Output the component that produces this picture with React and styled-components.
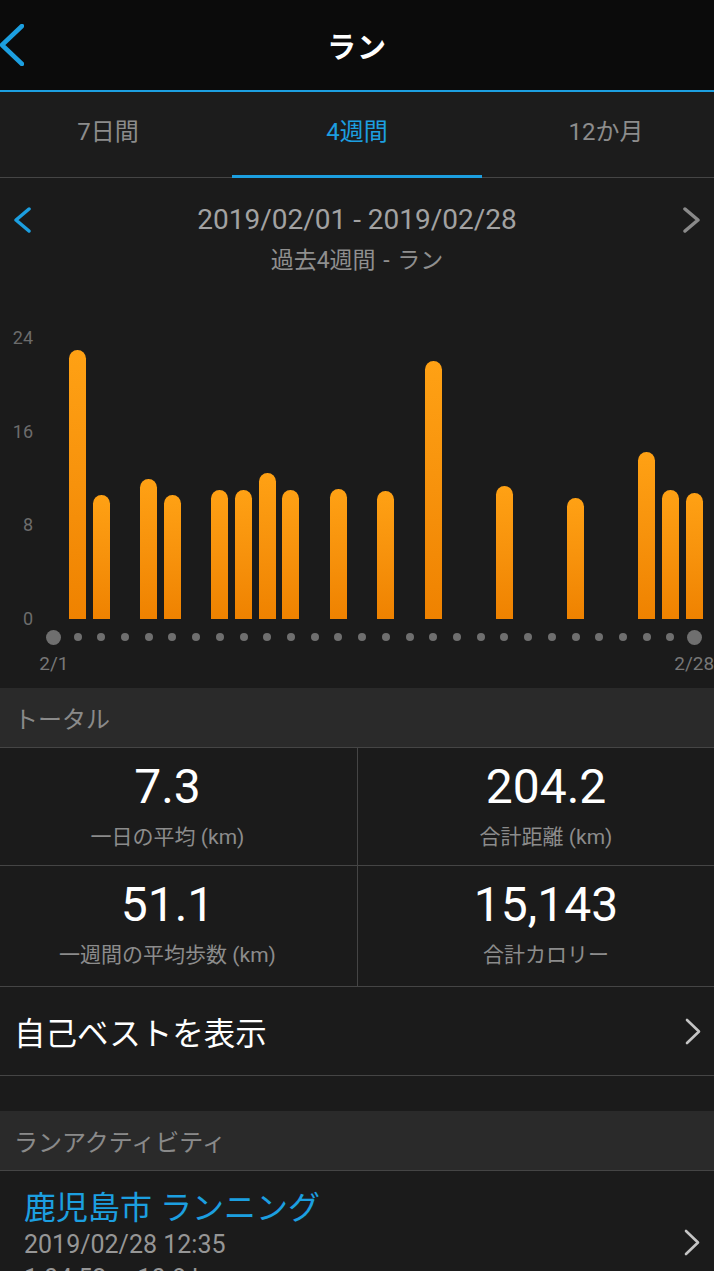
import React from 'react'
import styled, { createGlobalStyle } from 'styled-components'

const GlobalStyle = createGlobalStyle`
    html, body {
        margin: 0;
        padding: 0;
        background: #1b1b1b;
    }
    body {
        font-family: Roboto, "Noto Sans CJK JP", sans-serif;
        -webkit-font-smoothing: antialiased;
    }
`

const BLUE = '#1c9fe0'
const LINE = '#454545'

const Page = styled.div`
    width: 714px;
    height: 1271px;
    overflow: hidden;
    background: #1b1b1b;
    color: #fff;
`

const Header = styled.header`
    height: 90px;
    background: #0b0b0b;
    border-bottom: 2px solid ${BLUE};
    display: grid;
    grid-template-columns: 80px 1fr 80px;
    align-items: center;
`

const BackButton = styled.div`
    display: flex;
    align-items: center;
    height: 100%;
`

const Title = styled.h1`
    margin: 0;
    text-align: center;
    font-size: 29px;
    font-weight: 700;
    letter-spacing: 1px;
`

const TabBar = styled.nav`
    height: 85px;
    display: grid;
    grid-template-columns: 216px 1fr 216px;
    border-bottom: 1px solid ${LINE};
    background: #1c1c1c;
`

const Tab = styled.div`
    display: flex;
    flex-direction: column;
    align-items: center;
`

const TabLabel = styled.div`
    flex: 1;
    display: flex;
    align-items: center;
    padding-bottom: 8px;
    font-size: 24px;
    color: ${p => (p.$active ? BLUE : '#8c8c8c')};
`

const TabLine = styled.div`
    width: 250px;
    height: 3px;
    margin-bottom: -1px;
    background: ${p => (p.$active ? BLUE : 'transparent')};
`

const RangeSection = styled.section`
    padding-top: 25px;
`

const RangeRow = styled.div`
    display: flex;
    align-items: center;
    justify-content: space-between;
    padding: 0 14px;
`

const RangeText = styled.div`
    font-size: 28px;
    line-height: 34px;
    color: #a2a2a2;
`

const SubText = styled.div`
    text-align: center;
    font-size: 23px;
    line-height: 30px;
    margin-top: 9px;
    color: #8f8f8f;
    word-spacing: 2px;
`

const ChartBody = styled.div`
    display: flex;
    align-items: flex-start;
    margin-top: 52px;
`

const Axis = styled.div`
    width: 33px;
    height: 301px;
    padding-right: 9px;
    display: flex;
    flex-direction: column;
    justify-content: space-between;
    align-items: flex-end;
`

const AxisLabel = styled.div`
    font-size: 18px;
    line-height: 20px;
    color: #6c6c6c;
`

const Plot = styled.div`
    width: 664px;
    display: grid;
    grid-template-columns: repeat(28, minmax(0, 1fr));
    grid-template-rows: 291px 36px 16px;
`

const BarCell = styled.div`
    display: flex;
    align-items: flex-end;
    justify-content: center;
`

const Bar = styled.div`
    width: 17px;
    border-radius: 8.5px 8.5px 0 0;
    background: linear-gradient(180deg, #ffa114 0%, #f7920c 50%, #ef8200 100%);
`

const DotCell = styled.div`
    display: flex;
    align-items: center;
    justify-content: center;
`

const Dot = styled.div`
    flex: none;
    width: ${p => (p.$big ? 15 : 8)}px;
    height: ${p => (p.$big ? 15 : 8)}px;
    border-radius: 50%;
    background: #6f6f6f;
`

const DateCell = styled.div`
    display: flex;
    justify-content: center;
    align-items: center;
    white-space: nowrap;
    font-size: 19px;
    color: #777;
`

const SectionHead = styled.div`
    height: 60px;
    margin-top: ${p => p.$gap || 0}px;
    background: #2a2a2a;
    border-bottom: 1px solid ${LINE};
    display: flex;
    align-items: center;
    padding-left: 14px;
    font-size: 24px;
    color: #8a8a8a;
    box-sizing: border-box;
`

const StatGrid = styled.div`
    display: grid;
    grid-template-columns: 358px 1fr;
    grid-template-rows: 118px 120px;
    border-bottom: 1px solid ${LINE};
`

const Stat = styled.div`
    display: flex;
    flex-direction: column;
    align-items: center;
    padding-top: 12px;
    padding-right: ${p => (p.$left ? 22 : 0)}px;
    padding-left: ${p => (p.$left ? 0 : 20)}px;
    box-sizing: border-box;
    border-right: ${p => (p.$left ? `1px solid ${LINE}` : 'none')};
    border-bottom: ${p => (p.$top ? `1px solid ${LINE}` : 'none')};
`

const StatValue = styled.div`
    font-size: 48px;
    line-height: 54px;
    color: #fff;
`

const StatLabel = styled.div`
    margin-top: 9px;
    font-size: 21px;
    line-height: 28px;
    color: #8c8c8c;
`

const LinkRow = styled.div`
    height: 88px;
    display: flex;
    align-items: center;
    justify-content: space-between;
    padding: 0 13px 0 14px;
    border-bottom: 1px solid ${LINE};
    font-size: 31.5px;
    color: #fff;
`

const ActivityRow = styled.div`
    display: flex;
    align-items: center;
    justify-content: space-between;
    padding: 17px 14px 0 24px;
`

const ActivityInfo = styled.div`
    display: flex;
    flex-direction: column;
`

const ActivityTitle = styled.div`
    font-size: 32px;
    line-height: 40px;
    color: ${BLUE};
`

const ActivityMeta = styled.div`
    font-size: 25px;
    line-height: 34px;
    color: #969696;
    white-space: pre;
`

const Chevron = ({ dir = 'right', color, w = 16, h = 24, stroke = 3 }) => (
    <svg width={w} height={h} viewBox={`0 0 ${w} ${h}`} fill="none">
        <path
            d={dir === 'left'
                ? `M${w - 2} 2 L2 ${h / 2} L${w - 2} ${h - 2}`
                : `M2 2 L${w - 2} ${h / 2} L2 ${h - 2}`}
            stroke={color}
            strokeWidth={stroke}
            strokeLinecap="round"
            strokeLinejoin="round"
        />
    </svg>
)

const runs = { 1: 23.0, 2: 10.6, 4: 12.0, 5: 10.6, 7: 11.0, 8: 11.0, 9: 12.5, 10: 11.0, 12: 11.1, 14: 10.9, 16: 22.0, 19: 11.4, 22: 10.3, 25: 14.3, 26: 11.0, 27: 10.8 }
const days = Array.from({ length: 28 }, (_, i) => i)
const PX_PER_KM = 281 / 24

const stats = [
    { value: '7.3', label: '一日の平均 (km)' },
    { value: '204.2', label: '合計距離 (km)' },
    { value: '51.1', label: '一週間の平均歩数 (km)' },
    { value: '15,143', label: '合計カロリー' },
]

const App = () => {
    return (
        <Page>
            <GlobalStyle />
            <Header>
                <BackButton>
                    <Chevron dir="left" color={BLUE} w={24} h={42} stroke={4.5} />
                </BackButton>
                <Title>ラン</Title>
                <div />
            </Header>

            <TabBar>
                {['7日間', '4週間', '12か月'].map((t, i) => (
                    <Tab key={t}>
                        <TabLabel $active={i === 1}>{t}</TabLabel>
                        <TabLine $active={i === 1} />
                    </Tab>
                ))}
            </TabBar>

            <RangeSection>
                <RangeRow>
                    <Chevron dir="left" color={BLUE} w={17} h={26} stroke={3.5} />
                    <RangeText>2019/02/01 - 2019/02/28</RangeText>
                    <Chevron dir="right" color="#8a8a8a" w={17} h={26} stroke={3.5} />
                </RangeRow>
                <SubText>過去4週間 - ラン</SubText>

                <ChartBody>
                    <Axis>
                        {['24', '16', '8', '0'].map(l => <AxisLabel key={l}>{l}</AxisLabel>)}
                    </Axis>
                    <Plot>
                        {days.map(d => (
                            <BarCell key={'b' + d}>
                                {runs[d] && <Bar style={{ height: runs[d] * PX_PER_KM }} />}
                            </BarCell>
                        ))}
                        {days.map(d => (
                            <DotCell key={'d' + d}>
                                <Dot $big={d === 0 || d === 27} />
                            </DotCell>
                        ))}
                        {days.map(d => (
                            <DateCell key={'l' + d}>
                                {d === 0 ? '2/1' : d === 27 ? '2/28' : ''}
                            </DateCell>
                        ))}
                    </Plot>
                </ChartBody>
            </RangeSection>

            <SectionHead $gap={17}>トータル</SectionHead>
            <StatGrid>
                {stats.map((s, i) => (
                    <Stat key={s.label} $left={i % 2 === 0} $top={i < 2}>
                        <StatValue>{s.value}</StatValue>
                        <StatLabel>{s.label}</StatLabel>
                    </Stat>
                ))}
            </StatGrid>

            <LinkRow>
                自己ベストを表示
                <Chevron color="#c4c4c4" w={16} h={27} stroke={2.6} />
            </LinkRow>

            <SectionHead $gap={35}>ランアクティビティ</SectionHead>
            <ActivityRow>
                <ActivityInfo>
                    <ActivityTitle>鹿児島市 ランニング</ActivityTitle>
                    <ActivityMeta>2019/02/28 12:35</ActivityMeta>
                    <ActivityMeta>{'1:04:52     10.8 km'}</ActivityMeta>
                </ActivityInfo>
                <Chevron color="#c4c4c4" w={16} h={27} stroke={2.6} />
            </ActivityRow>
        </Page>
    )
}

export default App
